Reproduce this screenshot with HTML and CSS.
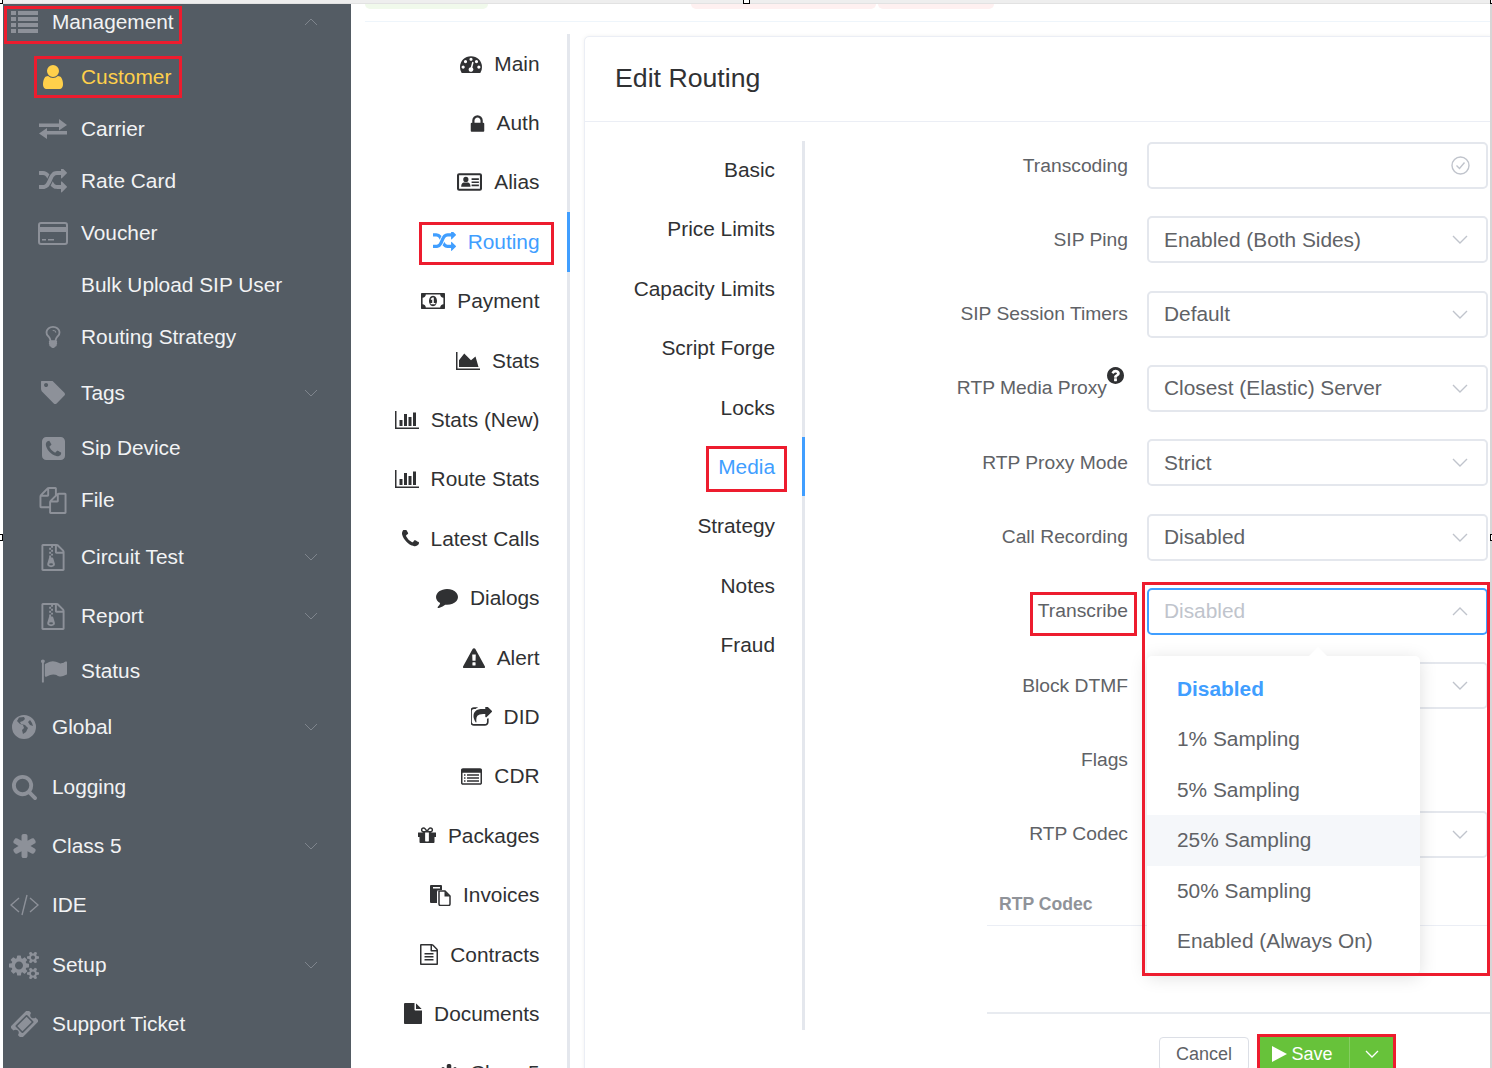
FILE: index.html
```html
<!DOCTYPE html>
<html lang="en">
<head>
<meta charset="utf-8">
<title>Edit Routing</title>
<link rel="stylesheet" href="styles.css">
</head>
<body>
<svg class="defs" aria-hidden="true">
  <symbol id="i-random" viewBox="0 200 1792 1400"><path d="M666 481q-60 92-137 273-22-45-37-72.5t-40.5-63.5-51-56.5-63-35-81.5-14.5h-224q-14 0-23-9t-9-23v-192q0-14 9-23t23-9h224q250 0 410 225zm1126 799q0 14-9 23l-320 320q-9 9-23 9-13 0-22.5-9.5t-9.5-22.5v-192q-32 0-85 .5t-81 1-73-1-71-5-64-10.5-63-18.5-58-28.5-59-40-55-53.5-56-69.5q59-93 136-273 22 45 37 72.5t40.5 63.5 51 56.5 63 35 81.5 14.5h256v-192q0-14 9-23t23-9q12 0 24 10l319 319q9 9 9 23zm0-896q0 14-9 23l-320 320q-9 9-23 9-13 0-22.5-9.5t-9.5-22.5v-192h-256q-48 0-87 15t-69 45-51 61.5-45 77.5q-32 62-78 171-29 66-49.5 111t-54 105-64 100-74 83-90 68.5-106.5 42-128 16.5h-224q-14 0-23-9t-9-23v-192q0-14 9-23t23-9h224q48 0 87-15t69-45 51-61.5 45-77.5q32-62 78-171 29-66 49.5-111t54-105 64-100 74-83 90-68.5 106.5-42 128-16.5h256v-192q0-14 9-23t23-9q12 0 24 10l319 319q9 9 9 23z"/></symbol>
  <symbol id="i-user" viewBox="256 128 1280 1536"><path d="M1536 1399q0 109-62.5 187t-150.5 78h-854q-88 0-150.5-78t-62.5-187q0-85 8.5-160.5t31.5-152 58.5-131 94-89 134.5-34.5q131 128 313 128t313-128q76 0 134.5 34.5t94 89 58.5 131 31.5 152 8.5 160.5zm-256-887q0 159-112.5 271.5t-271.5 112.5-271.5-112.5-112.5-271.5 112.5-271.5 271.5-112.5 271.5 112.5 112.5 271.5z"/></symbol>
  <symbol id="i-lock" viewBox="256 128 1280 1408"><path d="M640 768h512v-192q0-106-75-181t-181-75-181 75-75 181v192zm832 96v576q0 40-28 68t-68 28h-960q-40 0-68-28t-28-68v-576q0-40 28-68t68-28h32v-192q0-184 132-316t316-132 316 132 132 316v192h32q40 0 68 28t28 68z"/></symbol>
  <symbol id="i-search" viewBox="0 128 1728 1664"><path d="M1216 832q0-185-131.5-316.5t-316.5-131.5-316.5 131.5-131.5 316.5 131.5 316.5 316.5 131.5 316.5-131.5 131.5-316.5zm512 832q0 52-38 90t-90 38q-54 0-90-38l-343-342q-179 124-399 124-143 0-273.5-55.5t-225-150-150-225-55.5-273.5 55.5-273.5 150-225 225-150 273.5-55.5 273.5 55.5 225 150 150 225 55.5 273.5q0 220-124 399l343 343q37 37 37 90z"/></symbol>
  <symbol id="i-phone" viewBox="192 192 1408 1408"><path d="M1600 1240q0 27-10 70.5t-21 68.5q-21 50-122 106-94 51-186 51-27 0-53-3.5t-57.5-12.5-47-14.5-55.5-20.5-49-18q-98-35-175-83-127-79-264-216t-216-264q-48-77-83-175-3-9-18-49t-20.5-55.5-14.5-47-12.5-57.5-3.5-53q0-92 51-186 56-101 106-122 25-11 68.5-21t70.5-10q14 0 21 3 18 6 53 76 11 19 30 54t35 63.5 31 53.5q3 4 17.5 25t21.5 35.5 7 28.5q0 20-28.5 50t-62 55-62 53-28.5 46q0 9 5 22.5t8.5 20.5 14 24 11.5 19q76 137 174 235t235 174q2 1 19 11.5t24 14 20.5 8.5 22.5 5q18 0 46-28.5t53-62 55-62 50-28.5q14 0 28.5 7t35.5 21.5 25 17.5q25 15 53.5 31t63.5 35 54 30q70 35 76 53 3 7 3 21z"/></symbol>
  <symbol id="i-phone-square" viewBox="128 128 1536 1536"><path d="M1408 1193q0-11-2-16t-18-16.5-40.5-25-47.5-26.5-45.5-25-28.5-15q-5-3-19-13t-25-15-21-5q-15 0-36.5 20.5t-39.5 45-38.5 45-33.5 20.5q-7 0-16.5-3.5t-15.5-6.5-17-9.5-14-8.5q-99-55-170-126.5t-127-170.5q-2-3-8.5-14t-9.5-17-6.5-15.5-3.5-16.5q0-13 20.5-33.5t45-38.5 45-39.5 20.5-36.5q0-10-5-21t-15-25-13-19q-3-6-15-28.5t-25-45.5-26.5-47.5-25-40.5-16.5-18-16-2q-48 0-101 22-46 21-80 94.5t-34 130.5q0 16 2.5 34t5 30.5 9 33 10 29.5 12.5 33 11 30q60 164 216.5 320.5t320.5 216.5q6 2 30 11t33 12.5 29.5 10 33 9 30.5 5 34 2.5q57 0 130.5-34t94.5-80q22-53 22-101zm256-777v960q0 119-84.5 203.5t-203.5 84.5h-960q-119 0-203.5-84.5t-84.5-203.5v-960q0-119 84.5-203.5t203.5-84.5h960q119 0 203.5 84.5t84.5 203.5z"/></symbol>
  <symbol id="i-asterisk" viewBox="170 128 1450 1536"><path d="M1546 1050q46 26 59.5 77.5t-12.5 97.5l-64 110q-26 46-77.5 59.5t-97.5-12.5l-266-153v307q0 52-38 90t-90 38h-128q-52 0-90-38t-38-90v-307l-266 153q-46 26-97.5 12.5t-77.5-59.5l-64-110q-26-46-12.5-97.5t59.5-77.5l266-154-266-154q-46-26-59.5-77.5t12.5-97.5l64-110q26-46 77.5-59.5t97.5 12.5l266 153v-307q0-52 38-90t90-38h128q52 0 90 38t38 90v307l266-153q46-26 97.5-12.5t77.5 59.5l64 110q26 46 12.5 97.5t-59.5 77.5l-266 154z"/></symbol>
  <symbol id="i-tag" viewBox="128 192 1515 1516"><path d="M576 448q0-53-37.5-90.5t-90.5-37.5-90.5 37.5-37.5 90.5 37.5 90.5 90.5 37.5 90.5-37.5 37.5-90.5zm1067 576q0 53-37 90l-491 492q-39 37-91 37-53 0-90-37l-715-716q-38-37-64.5-101t-26.5-117v-416q0-52 38-90t90-38h416q53 0 117 26.5t102 64.5l715 714q37 39 37 91z"/></symbol>
  <symbol id="i-warning" viewBox="0 0 1792 1600"><path d="M1024 1375v-190q0-14-9.5-23.5t-22.5-9.5h-192q-13 0-22.5 9.5t-9.5 23.5v190q0 14 9.5 23.5t22.5 9.5h192q13 0 22.5-9.5t9.5-23.5zm-2-374l18-459q0-12-10-19-13-11-24-11h-220q-11 0-24 11-10 7-10 21l17 457q0 10 10 16.5t24 6.5h185q14 0 23.5-6.5t10.5-16.5zm-14-934l768 1408q35 63-2 126-17 29-46.5 46t-63.5 17h-1536q-34 0-63.5-17t-46.5-46q-37-63-2-126l768-1408q17-31 47-49t65-18 65 18 47 49z"/></symbol>
  <symbol id="i-comment" viewBox="0 256 1792 1536"><path d="M1792 896q0 174-120 321.5t-326 233-450 85.5q-70 0-145-8-198 175-460 242-49 14-114 22-17 2-30.5-9t-17.5-29v-1q-3-4-.5-12t2-10 4.5-9.5l6-9 7-8.5 8-9q7-8 31-34.5t34.5-38 31-39.5 32.5-51 27-59 26-76q-157-89-247.5-220t-90.5-281q0-130 71-248.5t191-204.5 286-136.5 348-50.5q244 0 450 85.5t326 233 120 321.5z"/></symbol>
  <symbol id="i-file" viewBox="128 0 1536 1792"><path d="M1152 512v-472q22 14 36 28l408 408q14 14 28 36h-472zm-128 32q0 40 28 68t68 28h544v1056q0 40-28 68t-68 28h-1344q-40 0-68-28t-28-68v-1600q0-40 28-68t68-28h800v544z"/></symbol>
  <symbol id="i-bars" viewBox="0 128 2048 1536"><path d="M640 896v512h-256v-512h256zm384-512v1024h-256v-1024h256zm1024 1152v128h-2048v-1536h128v1408h1920zm-640-896v768h-256v-768h256zm384-384v1152h-256v-1152h256z"/></symbol>
  <symbol id="i-area" viewBox="0 128 2048 1536"><path d="M2048 1536v128h-2048v-1536h128v1408h1920zm-384-1024l256 896h-1664v-576l448-576 576 576z"/></symbol>
  <symbol id="i-gift" viewBox="128 192 1536 1408"><path d="M1056 1356v-716h-320v716q0 25 18 38.5t46 13.5h192q28 0 46-13.5t18-38.5zm-456-844h195l-126-161q-26-31-69-31-40 0-68 28t-28 68 28 68 68 28zm688-96q0-40-28-68t-68-28q-43 0-69 31l-125 161h194q40 0 68-28t28-68zm376 256v320q0 14-9 23t-23 9h-96v416q0 40-28 68t-68 28h-1088q-40 0-68-28t-28-68v-416h-96q-14 0-23-9t-9-23v-320q0-14 9-23t23-9h440q-93 0-158.500-65.500t-65.500-158.500 65.500-158.500 158.500-65.500q107 0 168 77l128 165 128-165q61-77 168-77 93 0 158.500 65.500t65.500 158.500-65.500 158.500-158.500 65.500h440q14 0 23 9t9 23z"/></symbol>
  <symbol id="i-flag" viewBox="0 128 1792 1536"><path d="M320 256q0 72-64 110v1266q0 13-9.500 22.500t-22.500 9.500h-64q-13 0-22.500-9.500t-9.500-22.500v-1266q-64-38-64-110 0-53 37.500-90.500t90.500-37.500 90.500 37.500 37.500 90.500zm1472 64v763q0 25-12.500 38.500t-39.500 27.500q-215 116-369 116-61 0-123.500-22t-108.500-48-115.500-48-142.500-22q-192 0-464 146-17 9-33 9-26 0-45-19t-19-45v-742q0-32 31-55 21-14 79-43 236-120 421-120 107 0 200 29t219 88q38 19 88 19 54 0 117.500-21t110-47 88-47 54.500-21q26 0 45 19t19 45z"/></symbol>
  <symbol id="i-tacho" viewBox="0 256 1792 1280"><path d="M384 1152q0-53-37.500-90.500t-90.500-37.500-90.500 37.500-37.500 90.500 37.500 90.500 90.500 37.500 90.500-37.500 37.500-90.500zm192-448q0-53-37.500-90.500t-90.500-37.500-90.500 37.500-37.500 90.500 37.500 90.500 90.500 37.500 90.500-37.500 37.500-90.500zm428 481l101-382q6-26-7.500-48.500t-38.500-29.500-48 6.500-30 39.500l-101 382q-60 5-107 43.500t-63 98.500q-20 77 20 146t117 89 146-20 89-117q16-60-6-117t-72-91zm660-33q0-53-37.500-90.500t-90.500-37.500-90.500 37.500-37.500 90.500 37.500 90.500 90.500 37.500 90.500-37.500 37.500-90.500zm-640-640q0-53-37.500-90.500t-90.500-37.500-90.500 37.500-37.500 90.500 37.500 90.500 90.500 37.500 90.500-37.500 37.500-90.500zm448 192q0-53-37.500-90.500t-90.500-37.500-90.500 37.500-37.500 90.500 37.500 90.500 90.500 37.500 90.500-37.500 37.500-90.500zm320 448q0 261-141 483-19 29-54 29h-1402q-35 0-54-29-141-221-141-483 0-182 71-348t191-286 286-191 348-71 348 71 286 191 191 286 71 348z"/></symbol>
  <symbol id="i-share" viewBox="128 128 1600 1408"><path d="M1472 989v259q0 119-84.500 203.500t-203.500 84.500h-832q-119 0-203.500-84.500t-84.500-203.500v-832q0-119 84.500-203.500t203.500-84.500h255q13 0 22.500 9.500t9.500 22.500q0 27-26 32-77 26-133 60-10 4-16 4h-112q-66 0-113 47t-47 113v832q0 66 47 113t113 47h832q66 0 113-47t47-113v-214q0-19 18-29 28-13 54-37 16-16 35-8 21 9 21 29zm237-496l-384 384q-18 19-45 19-12 0-25-5-39-17-39-59v-192h-160q-323 0-438 131-119 137-74 473 3 23-20 34-8 2-12 2-16 0-26-13-10-14-21-31t-39.500-68.500-49.500-99.500-38.500-114-17.500-122q0-49 3.500-91t14-90 28-88 47-81.500 68.500-74 94.500-61.500 124.500-48.500 159.500-30.500 196.500-11h160v-192q0-42 39-59 13-5 25-5 26 0 45 19l384 384q19 19 19 45t-19 45z"/></symbol>
  <symbol id="i-file-text" viewBox="128 0 1536 1792"><path d="M1596 380q28 28 48 76t20 88v1152q0 40-28 68t-68 28h-1344q-40 0-68-28t-28-68v-1600q0-40 28-68t68-28h896q40 0 88 20t76 48zm-444-244v376h376q-10-29-22-41l-313-313q-12-12-41-22zm384 1528v-1024h-416q-40 0-68-28t-28-68v-416h-768v1536h1280zm-1024-864q0-14 9-23t23-9h704q14 0 23 9t9 23v64q0 14-9 23t-23 9h-704q-14 0-23-9t-9-23v-64zm736 224q14 0 23 9t9 23v64q0 14-9 23t-23 9h-704q-14 0-23-9t-9-23v-64q0-14 9-23t23-9h704zm0 256q14 0 23 9t9 23v64q0 14-9 23t-23 9h-704q-14 0-23-9t-9-23v-64q0-14 9-23t23-9h704z"/></symbol>
  <symbol id="i-zip" viewBox="128 0 1536 1792"><path d="M768 384v-128h-128v128h128zm128 128v-128h-128v128h128zm-128 128v-128h-128v128h128zm128 128v-128h-128v128h128zm700-388q28 28 48 76t20 88v1152q0 40-28 68t-68 28h-1344q-40 0-68-28t-28-68v-1600q0-40 28-68t68-28h896q40 0 88 20t76 48zm-444-244v376h376q-10-29-22-41l-313-313q-12-12-41-22zm384 1528v-1024h-416q-40 0-68-28t-28-68v-416h-128v128h-128v-128h-512v1536h1280zm-627-721l107 349q8 27 8 52 0 83-72.500 137.500t-183.500 54.500-183.500-54.500-72.500-137.500q0-25 8-52 21-63 120-396v-128h128v128h79q22 0 39 13t23 34zm-141 465q53 0 90.500-19t37.500-45-37.500-45-90.500-19-90.500 19-37.500 45 37.500 45 90.500 19z"/></symbol>
  <symbol id="i-files" viewBox="0 0 1792 1792"><path d="M1696 384q40 0 68 28t28 68v1216q0 40-28 68t-68 28h-960q-40 0-68-28t-28-68v-288h-544q-40 0-68-28t-28-68v-672q0-40 20-88t48-76l408-408q28-28 76-48t88-20h416q40 0 68 28t28 68v328q68-40 128-40h416zm-544 213l-299 299h299v-299zm-640-384l-299 299h299v-299zm196 647l316-316v-416h-384v416q0 40-28 68t-68 28h-416v640h512v-256q0-40 20-88t48-76zm956 804v-1152h-384v416q0 40-28 68t-68 28h-416v640h896z"/></symbol>
  <symbol id="i-bulb" viewBox="384 64 1024 1664"><path d="M1120 576q0 13-9.500 22.500t-22.500 9.500-22.500-9.500-9.500-22.500q0-46-54-71t-106-25q-13 0-22.500-9.500t-9.500-22.500 9.500-22.500 22.500-9.500q50 0 99.500 16t87 54 37.500 90zm160 0q0-72-34.500-134t-90-101.500-123-62-136.500-22.500-136.500 22.500-123 62-90 101.500-34.500 134q0 101 68 180 10 11 30.500 33t30.500 33q128 153 141 298h228q13-145 141-298 10-11 30.500-33t30.500-33q68-79 68-180zm128 0q0 155-103 268-45 49-74.500 87t-59.500 95.500-34 107.500q47 28 47 82 0 37-25 64 25 27 25 64 0 52-45 81 13 23 13 47 0 46-31.500 71t-77.500 25q-20 44-60 70t-87 26-87-26-60-70q-46 0-77.500-25t-31.500-71q0-24 13-47-45-29-45-81 0-37 25-64-25-27-25-64 0-54 47-82-4-50-34-107.500t-59.500-95.500-74.500-87q-103-113-103-268 0-99 44.500-184.500t117-142 164-89 186.500-32.500 186.500 32.500 164 89 117 142 44.500 184.500z"/></symbol>
  <symbol id="i-cogs" viewBox="0 128 1920 1536"><path d="M896 896q0-106-75-181t-181-75-181 75-75 181 75 181 181 75 181-75 75-181zm768 512q0-52-38-90t-90-38-90 38-38 90q0 53 37.500 90.500t90.500 37.500 90.500-37.500 37.500-90.500zm0-1024q0-52-38-90t-90-38-90 38-38 90q0 53 37.500 90.500t90.500 37.500 90.500-37.500 37.500-90.500zm-384 421v185q0 10-7 19.500t-16 10.500l-155 24q-11 35-32 76 34 48 90 115 7 11 7 20 0 12-7 19-23 30-82.500 89.500t-78.500 59.500q-11 0-21-7l-115-90q-37 19-77 31-11 108-23 155-7 24-30 24h-186q-11 0-20-7.500t-10-17.500l-23-153q-34-10-75-31l-118 89q-7 7-20 7-11 0-21-8-144-133-144-160 0-9 7-19 10-14 41-53t47-61q-23-44-35-82l-152-24q-10-1-17-9.500t-7-19.500v-185q0-10 7-19.500t16-10.500l155-24q11-35 32-76-34-48-90-115-7-11-7-19 0-12 7-20 22-30 82-89t79-59q11 0 21 7l115 90q34-18 77-32 11-108 23-154 7-24 30-24h186q11 0 20 7.500t10 17.500l23 153q34 10 75 31l118-89q8-7 20-7 11 0 21 8 144 133 144 160 0 8-7 19-12 16-42 54t-45 60q23 48 34 82l152 23q10 2 17 10.500t7 19.500zm640 533v140q0 16-149 31-12 27-30 52 51 113 51 138 0 4-4 7-122 71-124 71-8 0-46-47t-52-68q-20 2-30 2t-30-2q-14 21-52 68t-46 47q-2 0-124-71-4-3-4-7 0-25 51-138-18-25-30-52-149-15-149-31v-140q0-16 149-31 13-29 30-52-51-113-51-138 0-4 4-7 4-2 35-20t59-34 30-16q8 0 46 46.500t52 67.500q20-2 30-2t30 2q51-71 92-112l6-2q4 0 124 70 4 3 4 7 0 25-51 138 17 23 30 52 149 15 149 31zm0-1024v140q0 16-149 31-12 27-30 52 51 113 51 138 0 4-4 7-122 71-124 71-8 0-46-47t-52-68q-20 2-30 2t-30-2q-14 21-52 68t-46 47q-2 0-124-71-4-3-4-7 0-25 51-138-18-25-30-52-149-15-149-31v-140q0-16 149-31 13-29 30-52-51-113-51-138 0-4 4-7 4-2 35-20t59-34 30-16q8 0 46 46.500t52 67.500q20-2 30-2t30 2q51-71 92-112l6-2q4 0 124 70 4 3 4 7 0 25-51 138 17 23 30 52 149 15 149 31z"/></symbol>
  <symbol id="i-ticket" viewBox="64 128 1664 1536"><path d="M1024 452l316 316-572 572-316-316zm-211 979l618-618q19-19 19-45t-19-45l-362-362q-18-18-45-18t-45 18l-618 618q-19 19-19 45t19 45l362 362q18 18 45 18t45-18zm889-637l-907 908q-37 37-90.500 37t-90.500-37l-126-126q56-56 56-136t-56-136-136-56-136 56l-125-126q-37-37-37-90.500t37-90.500l907-906q37-37 90.500-37t90.500 37l125 125q-56 56-56 136t56 136 136 56 136-56l126 125q37 37 37 90.500t-37 90.500z"/></symbol>
  <symbol id="i-money" viewBox="0 256 1920 1280"><path d="M768 1152h384v-96h-128v-448h-114l-148 137 77 80q42-37 55-57h2v288h-128v96zm512-256q0 70-21 142t-59.500 134-101.500 101-138 39-138-39-101.500-101-59.500-134-21-142 21-142 59.500-134 101.500-101 138-39 138 39 101.500 101 59.500 134 21 142zm512 256v-512q-106 0-181-75t-75-181h-1152q0 106-75 181t-181 75v512q106 0 181 75t75 181h1152q0-106 75-181t181-75zm128-832v1152q0 26-19 45t-45 19h-1792q-26 0-45-19t-19-45v-1152q0-26 19-45t45-19h1792q26 0 45 19t19 45z"/></symbol>
  <symbol id="i-list-alt" viewBox="0 128 1792 1408"><path d="M384 1184v64q0 13-9.500 22.500t-22.500 9.500h-64q-13 0-22.500-9.500t-9.500-22.500v-64q0-13 9.500-22.500t22.500-9.500h64q13 0 22.500 9.500t9.500 22.500zm0-256v64q0 13-9.500 22.500t-22.500 9.500h-64q-13 0-22.500-9.500t-9.500-22.500v-64q0-13 9.500-22.500t22.500-9.500h64q13 0 22.500 9.500t9.500 22.500zm0-256v64q0 13-9.500 22.500t-22.500 9.500h-64q-13 0-22.500-9.500t-9.500-22.500v-64q0-13 9.500-22.500t22.500-9.500h64q13 0 22.500 9.500t9.500 22.500zm1152 512v64q0 13-9.500 22.500t-22.500 9.500h-960q-13 0-22.500-9.500t-9.500-22.500v-64q0-13 9.500-22.500t22.500-9.500h960q13 0 22.500 9.500t9.500 22.500zm0-256v64q0 13-9.500 22.500t-22.500 9.500h-960q-13 0-22.500-9.500t-9.500-22.500v-64q0-13 9.500-22.500t22.500-9.500h960q13 0 22.500 9.500t9.500 22.500zm0-256v64q0 13-9.500 22.500t-22.500 9.500h-960q-13 0-22.500-9.500t-9.500-22.500v-64q0-13 9.500-22.500t22.500-9.500h960q13 0 22.500 9.500t9.500 22.500zm128 704v-832q0-13-9.500-22.500t-22.500-9.500h-1472q-13 0-22.500 9.500t-9.500 22.500v832q0 13 9.500 22.500t22.500 9.500h1472q13 0 22.500-9.500t9.500-22.500zm128-1088v1088q0 66-47 113t-113 47h-1472q-66 0-113-47t-47-113v-1088q0-66 47-113t113-47h1472q66 0 113 47t47 113z"/></symbol>
  <symbol id="i-help" viewBox="128 128 1536 1536"><path d="M1024 1376v-192q0-14-9-23t-23-9h-192q-14 0-23 9t-9 23v192q0 14 9 23t23 9h192q14 0 23-9t9-23zm256-672q0-88-55.500-163t-138.500-116-170-41q-243 0-371 213-15 24 8 42l132 100q7 6 19 6 16 0 25-12 53-68 86-92 34-24 86-24 48 0 85.500 26t37.500 59q0 38-20 61t-68 45q-63 28-115.500 86.500t-52.500 125.500v36q0 14 9 23t23 9h192q14 0 23-9t9-23q0-19 21.500-49.500t54.500-49.500q32-18 49-28.500t46-35 44.500-48 28-60.500 12.500-81zm384 192q0 209-103 385.500t-279.500 279.500-385.500 103-385.500-103-279.500-279.500-103-385.500 103-385.500 279.500-279.500 385.500-103 385.500 103 279.500 279.500 103 385.500z"/></symbol>
  <symbol id="i-list" viewBox="0 0 27 22"><path d="M0 0h5v4H0zM7 0h20v4H7zM0 6h5v4H0zM7 6h20v4H7zM0 12h5v4H0zM7 12h20v4H7zM0 18h5v4H0zM7 18h20v4H7z"/></symbol>
  <symbol id="i-exchange" viewBox="0 0 28 20"><path d="M0 4.500h20V0l8 6-8 5.500V8H0zM28 12v3.500H8V20l-8-5.500L8 9v3z"/></symbol>
  <symbol id="i-card" viewBox="0 0 30 23"><path fill-rule="evenodd" d="M3 0h24a3 3 0 0 1 3 3v17a3 3 0 0 1-3 3H3a3 3 0 0 1-3-3V3a3 3 0 0 1 3-3zm0 2a1 1 0 0 0-1 1v2h26V3a1 1 0 0 0-1-1zM2 10v10a1 1 0 0 0 1 1h24a1 1 0 0 0 1-1V10zm2 7h4v1.500H4zm6 0h6v1.500h-6z"/></symbol>
  <symbol id="i-globe" viewBox="0 0 24 24"><path fill-rule="evenodd" d="M12 0a12 12 0 1 1 0 24 12 12 0 0 1 0-24zM7 2.500 5 6l3 3 3 1 1 3-2 2 1 4 3-2 2-4-3-3-4-1-1-2 3-1 2-2-1-2zM18 5l-2 2 2 3 3 1-1-3z"/></symbol>
  <symbol id="i-id" viewBox="0 0 24 17"><path fill-rule="evenodd" d="M2 0h20a2 2 0 0 1 2 2v13a2 2 0 0 1-2 2H2a2 2 0 0 1-2-2V2a2 2 0 0 1 2-2zm0 2v13h20V2zm6.500 1.500a2.500 2.500 0 1 1 0 5 2.500 2.500 0 0 1 0-5zM4 13c0-3 1.500-4 2.500-4h4c1 0 2.500 1 2.500 4zm10-8h7v1.500h-7zm0 3h7v1.500h-7zm0 3h7v1.500h-7z"/></symbol>
  <symbol id="i-invoice" viewBox="0 0 21 21"><path d="M1 0h10a1 1 0 0 1 1 1v4H9a2 2 0 0 0-2 2v11H1a1 1 0 0 1-1-1V1a1 1 0 0 1 1-1zM3 2v1.500h7V2z"/><path d="M9 6h6l5 5v8a1.500 1.500 0 0 1-1.500 1.500h-8A1.500 1.500 0 0 1 9 19z" fill="#fff" stroke="currentColor" stroke-width="1.500"/><path d="M14.500 6v5.500H20z"/></symbol>
</svg>

<div class="topstrip"></div>

<div class="layout">
  <nav class="side">
    <a class="item"><span class="ibox"><svg class="ic" width="27" height="22"><use href="#i-list"/></svg></span><span>Management</span><svg class="caret" width="14" height="8" viewBox="0 0 14 8"><path d="M1 7l6-6 6 6"/></svg></a>
    <div class="child m15 active"><span class="ibox"><svg class="ic" width="20" height="24"><use href="#i-user"/></svg></span><span>Customer</span></div>
    <div class="child m12"><span class="ibox"><svg class="ic" width="28" height="20"><use href="#i-exchange"/></svg></span><span>Carrier</span></div>
    <div class="child m12"><span class="ibox"><svg class="ic" width="28" height="24"><use href="#i-random"/></svg></span><span>Rate Card</span></div>
    <div class="child m12"><span class="ibox"><svg class="ic" width="30" height="23"><use href="#i-card"/></svg></span><span>Voucher</span></div>
    <div class="child m12"><span class="ibox"></span><span>Bulk Upload SIP User</span></div>
    <div class="child m12"><span class="ibox"><svg class="ic" width="16" height="24"><use href="#i-bulb"/></svg></span><span>Routing Strategy</span></div>
    <div class="child m16"><span class="ibox"><svg class="ic" width="24" height="24"><use href="#i-tag"/></svg></span><span>Tags</span><svg class="caret" width="14" height="8" viewBox="0 0 14 8"><path d="M1 1l6 6 6-6"/></svg></div>
    <div class="child m15"><span class="ibox"><svg class="ic" width="23" height="23"><use href="#i-phone-square"/></svg></span><span>Sip Device</span></div>
    <div class="child m12"><span class="ibox"><svg class="ic" width="28" height="27"><use href="#i-files"/></svg></span><span>File</span></div>
    <div class="child m17"><span class="ibox"><svg class="ic" width="24" height="27"><use href="#i-zip"/></svg></span><span>Circuit Test</span><svg class="caret" width="14" height="8" viewBox="0 0 14 8"><path d="M1 1l6 6 6-6"/></svg></div>
    <div class="child m19"><span class="ibox"><svg class="ic" width="24" height="27"><use href="#i-zip"/></svg></span><span>Report</span><svg class="caret" width="14" height="8" viewBox="0 0 14 8"><path d="M1 1l6 6 6-6"/></svg></div>
    <div class="child m15"><span class="ibox"><svg class="ic" width="27" height="24"><use href="#i-flag"/></svg></span><span>Status</span></div>
    <a class="item m16"><span class="ibox"><svg class="ic" width="24" height="24"><use href="#i-globe"/></svg></span><span>Global</span><svg class="caret" width="14" height="8" viewBox="0 0 14 8"><path d="M1 1l6 6 6-6"/></svg></a>
    <a class="item m20"><span class="ibox"><svg class="ic" width="26" height="25"><use href="#i-search"/></svg></span><span>Logging</span></a>
    <a class="item m19"><span class="ibox"><svg class="ic" width="23" height="24"><use href="#i-asterisk"/></svg></span><span>Class 5</span><svg class="caret" width="14" height="8" viewBox="0 0 14 8"><path d="M1 1l6 6 6-6"/></svg></a>
    <a class="item m19"><span class="ibox"><svg class="ic-line" width="29" height="22" viewBox="0 0 29 22"><path d="M9 4l-8 7 8 7M20 4l8 7-8 7M17 1l-5 20"/></svg></span><span>IDE</span></a>
    <a class="item m20"><span class="ibox"><svg class="ic" width="30" height="27"><use href="#i-cogs"/></svg></span><span>Setup</span><svg class="caret" width="14" height="8" viewBox="0 0 14 8"><path d="M1 1l6 6 6-6"/></svg></a>
    <a class="item m19"><span class="ibox"><svg class="ic" width="27" height="26"><use href="#i-ticket"/></svg></span><span>Support Ticket</span></a>
  </nav>

  <main class="content">
    <div class="pillbar">
      <span class="pill pill-green"></span>
      <span class="pill pill-red1"></span>
      <span class="pill pill-red2"></span>
    </div>

    <div class="workspace">
      <div class="subnav">
        <div class="sub"><svg width="22" height="18"><use href="#i-tacho"/></svg><span>Main</span></div>
        <div class="sub"><svg width="15" height="17"><use href="#i-lock"/></svg><span>Auth</span></div>
        <div class="sub"><svg width="25" height="18"><use href="#i-id"/></svg><span>Alias</span></div>
        <div class="sub sub-active"><svg width="23" height="19"><use href="#i-random"/></svg><span>Routing</span></div>
        <div class="sub"><svg width="24" height="16"><use href="#i-money"/></svg><span>Payment</span></div>
        <div class="sub"><svg width="24" height="18"><use href="#i-area"/></svg><span>Stats</span></div>
        <div class="sub"><svg width="24" height="18"><use href="#i-bars"/></svg><span>Stats (New)</span></div>
        <div class="sub"><svg width="24" height="18"><use href="#i-bars"/></svg><span>Route Stats</span></div>
        <div class="sub"><svg width="17" height="17"><use href="#i-phone"/></svg><span>Latest Calls</span></div>
        <div class="sub"><svg width="22" height="19"><use href="#i-comment"/></svg><span>Dialogs</span></div>
        <div class="sub"><svg width="22" height="20"><use href="#i-warning"/></svg><span>Alert</span></div>
        <div class="sub"><svg width="21" height="19"><use href="#i-share"/></svg><span>DID</span></div>
        <div class="sub"><svg width="21" height="17"><use href="#i-list-alt"/></svg><span>CDR</span></div>
        <div class="sub"><svg width="18" height="17"><use href="#i-gift"/></svg><span>Packages</span></div>
        <div class="sub"><svg width="21" height="21"><use href="#i-invoice"/></svg><span>Invoices</span></div>
        <div class="sub"><svg width="18" height="21"><use href="#i-file-text"/></svg><span>Contracts</span></div>
        <div class="sub"><svg width="18" height="21"><use href="#i-file"/></svg><span>Documents</span></div>
        <div class="sub"><svg width="18" height="18"><use href="#i-asterisk"/></svg><span>Class 5</span></div>
      </div>

      <section class="card">
        <header class="card-head">Edit Routing</header>
        <div class="card-body">
          <div class="tabs">
            <div class="tab">Basic</div>
            <div class="tab">Price Limits</div>
            <div class="tab">Capacity Limits</div>
            <div class="tab">Script Forge</div>
            <div class="tab">Locks</div>
            <div class="tab tab-active">Media</div>
            <div class="tab">Strategy</div>
            <div class="tab">Notes</div>
            <div class="tab">Fraud</div>
          </div>

          <form class="form">
            <div class="row"><label class="lbl">Transcoding</label>
              <div class="select"><span></span><svg class="check" width="19" height="19" viewBox="0 0 19 19"><circle cx="9.500" cy="9.500" r="8.500"/><path d="M5.500 9.500l3 3 5-6"/></svg></div></div>
            <div class="row"><label class="lbl">SIP Ping</label>
              <div class="select"><span>Enabled (Both Sides)</span><svg class="chev" width="16" height="9" viewBox="0 0 16 9"><path d="M1 1l7 7 7-7"/></svg></div></div>
            <div class="row"><label class="lbl">SIP Session Timers</label>
              <div class="select"><span>Default</span><svg class="chev" width="16" height="9" viewBox="0 0 16 9"><path d="M1 1l7 7 7-7"/></svg></div></div>
            <div class="row"><label class="lbl">RTP Media Proxy<svg class="help" width="17" height="17"><use href="#i-help"/></svg></label>
              <div class="select"><span>Closest (Elastic) Server</span><svg class="chev" width="16" height="9" viewBox="0 0 16 9"><path d="M1 1l7 7 7-7"/></svg></div></div>
            <div class="row"><label class="lbl">RTP Proxy Mode</label>
              <div class="select"><span>Strict</span><svg class="chev" width="16" height="9" viewBox="0 0 16 9"><path d="M1 1l7 7 7-7"/></svg></div></div>
            <div class="row"><label class="lbl">Call Recording</label>
              <div class="select"><span>Disabled</span><svg class="chev" width="16" height="9" viewBox="0 0 16 9"><path d="M1 1l7 7 7-7"/></svg></div></div>
            <div class="row"><label class="lbl">Transcribe</label>
              <div class="select select-open"><span>Disabled</span><svg class="chev" width="16" height="9" viewBox="0 0 16 9"><path d="M1 8l7-7 7 7"/></svg>
                <div class="dropdown">
                  <div class="opt opt-sel">Disabled</div>
                  <div class="opt">1% Sampling</div>
                  <div class="opt">5% Sampling</div>
                  <div class="opt opt-hover">25% Sampling</div>
                  <div class="opt">50% Sampling</div>
                  <div class="opt">Enabled (Always On)</div>
                </div>
              </div></div>
            <div class="row"><label class="lbl">Block DTMF</label>
              <div class="select"><span></span><svg class="chev" width="16" height="9" viewBox="0 0 16 9"><path d="M1 1l7 7 7-7"/></svg></div></div>
            <div class="row"><label class="lbl">Flags</label></div>
            <div class="row"><label class="lbl">RTP Codec</label>
              <div class="select"><span></span><svg class="chev" width="16" height="9" viewBox="0 0 16 9"><path d="M1 1l7 7 7-7"/></svg></div></div>

            <div class="table-head"><span>RTP Codec</span></div>
            <div class="form-rule"></div>
            <div class="actions">
              <button type="button" class="btn-cancel">Cancel</button>
              <div class="btn-save">
                <span class="save-main"><svg width="15" height="16" viewBox="0 0 15 16"><path d="M0 0l15 8-15 8z"/></svg>Save</span>
                <span class="save-more"><svg width="14" height="8" viewBox="0 0 14 8"><path d="M1 1l6 6 6-6"/></svg></span>
              </div>
            </div>
          </form>
        </div>
      </section>
    </div>
  </main>
</div>

<div class="mark mark-mgmt"></div>
<div class="mark mark-cust"></div>
<div class="mark mark-routing"></div>
<div class="mark mark-media"></div>
<div class="mark mark-transcribe"></div>
<div class="mark mark-drop"></div>
<div class="mark mark-save"></div>

<div class="edge-right"></div>
<div class="handle h-tl"></div>
<div class="handle h-t"></div>
<div class="handle h-tr"></div>
<div class="handle h-l"></div>
<div class="handle h-r"></div>
</body>
</html>
```
FILE: styles.css
```css
* { box-sizing: border-box; }
html, body { margin: 0; padding: 0; }
body {
  position: relative;
  width: 1492px;
  height: 1068px;
  overflow: hidden;
  background: #fff;
  font-family: "Liberation Sans", Arial, sans-serif;
  font-size: 20.85px;
  color: #303133;
}
svg { display: block; flex: none; fill: currentColor; }
.defs { position: absolute; width: 0; height: 0; overflow: hidden; }

.topstrip { position: absolute; left: 0; top: 0; width: 100%; height: 4px; background: #eeeeee; border-bottom: 1px solid #e2e2e2; z-index: 5; }
.edge-right { position: absolute; right: 0; top: 0; width: 2px; height: 100%; background: #d6d6d6; z-index: 5; }

.layout { display: flex; height: 100%; padding-left: 3px; }

/* Sidebar */
.side {
  width: 348px;
  flex: none;
  background: #545c64;
  color: #f2f3f4;
  padding-top: 2px;
}
.item, .child {
  display: flex;
  align-items: center;
  height: 40px;
  padding-right: 33px;
}
.item { padding-left: 5px; }
.child { padding-left: 34px; }
.ibox { width: 32px; margin-right: 12px; flex: none; display: flex; justify-content: center; align-items: center; }
.ic { color: #8d9199; }
.ic-line { fill: none; stroke: #8d9199; stroke-width: 1.4; }
.caret { margin-left: auto; fill: none; stroke: #7f858d; stroke-width: 1; }
.active { color: #ffd04b; }
.active .ic { color: #ffd04b; }
.m12 { margin-top: 12px; }
.m15 { margin-top: 15px; }
.m16 { margin-top: 16px; }
.m17 { margin-top: 17px; }
.m19 { margin-top: 19px; }
.m20 { margin-top: 20px; }

/* Content */
.content { flex: 1; min-width: 0; }
.pillbar {
  display: flex;
  height: 22px;
  margin-left: 14px;
  border-bottom: 1px solid #eef5fb;
}
.pill { height: 9px; border-radius: 0 0 5px 5px; flex: none; }
.pill-green { width: 123px; background: #f0f9eb; }
.pill-red1 { width: 185px; margin-left: 203px; background: #fef0f0; }
.pill-red2 { width: 116px; margin-left: 2px; background: #fef0f0; }

.workspace { display: flex; margin-top: 12px; }

.subnav {
  width: 219px;
  flex: none;
  border-right: 3px solid #e4e7ed;
  height: 1100px;
}
.sub {
  display: flex;
  align-items: center;
  justify-content: flex-end;
  gap: 12px;
  height: 59.4px;
  padding-right: 27.5px;
  margin-right: -3px;
  border-right: 3px solid transparent;
  color: #303133;
}
.sub-active { color: #409eff; border-right-color: #409eff; }

.card {
  flex: 1;
  min-width: 0;
  margin: 2px 0 0 14px;
  height: 1100px;
  background: #fff;
  border: 1px solid #ebeef5;
  border-radius: 5px 0 0 0;
  box-shadow: 0 0 4px rgba(0, 0, 0, .06);
}
.card-head {
  height: 85px;
  padding: 0 0 1px 30px;
  display: flex;
  align-items: center;
  font-size: 26.7px;
  border-bottom: 1px solid #ebeef5;
}
.card-body { display: flex; padding-top: 19px; align-items: flex-start; }

.tabs {
  width: 220px;
  flex: none;
  height: 889px;
  border-right: 3px solid #e4e7ed;
}
.tab {
  height: 59.4px;
  line-height: 59.4px;
  text-align: right;
  padding-right: 27px;
  margin-right: -3px;
  border-right: 3px solid transparent;
}
.tab:first-child { margin-top: -1px; }
.tab-active { color: #409eff; border-right-color: #409eff; }

.form { flex: 1; min-width: 0; padding-top: 1px; }
.row {
  display: flex;
  align-items: center;
  height: 47px;
  margin-bottom: 27.33px;
}
.lbl {
  width: 323px;
  flex: none;
  margin-right: 19px;
  display: flex;
  justify-content: flex-end;
  font-size: 19.25px;
  color: #606266;
}
.help { align-self: flex-start; margin: -10px 4px 0 0; color: #303133; }
.select {
  position: relative;
  width: 341px;
  height: 47px;
  flex: none;
  display: flex;
  align-items: center;
  justify-content: space-between;
  padding: 0 18px 0 15px;
  border: 2px solid #e4e7ed;
  border-radius: 5px;
  color: #606266;
}
.chev { fill: none; stroke: #c0c4cc; stroke-width: 1.4; }
.check { fill: none; stroke: #c0c4cc; stroke-width: 1.4; margin-right: -2px; }
.select-open { border-color: #409eff; color: #c0c4cc; }

.dropdown {
  position: absolute;
  left: -2px;
  top: 66px;
  width: 273px;
  padding: 8px 0;
  background: #fff;
  border-radius: 5px;
  box-shadow: 0 3px 18px rgba(0, 0, 0, .13);
  z-index: 3;
}
.dropdown::before {
  content: "";
  position: absolute;
  left: 162px;
  top: -9px;
  border: 9px solid transparent;
  border-top: 0;
  border-bottom-color: #fff;
}
.opt {
  height: 50.4px;
  line-height: 50.4px;
  padding-left: 30px;
  color: #606266;
}
.opt-sel { color: #409eff; font-weight: 700; }
.opt-hover { background: #f5f7fa; }

.table-head {
  margin: -2px 0 0 182px;
  height: 43px;
  padding: 11px 0 0 12px;
  border-bottom: 1px solid #ebeef5;
  font-size: 17.6px;
  font-weight: 700;
  color: #909399;
}
.form-rule { margin: 86px 0 0 182px; border-top: 2px solid #e8ebf0; }
.actions {
  display: flex;
  justify-content: flex-end;
  gap: 11px;
  padding-right: 97px;
  margin-top: 23px;
}
.btn-cancel {
  width: 90px;
  height: 34px;
  background: #fff;
  border: 1px solid #dcdfe6;
  border-radius: 4px;
  font: 18px "Liberation Sans", Arial, sans-serif;
  color: #606266;
  padding: 0;
}
.btn-save {
  display: flex;
  width: 134px;
  height: 34px;
  background: #67c23a;
  color: #fff;
  font-size: 18px;
}
.save-main { width: 90px; display: flex; align-items: center; justify-content: center; gap: 4px; padding-right: 4px; border-right: 1px solid #85ce61; }
.save-more { flex: 1; display: flex; align-items: center; justify-content: center; }
.save-more svg { fill: none; stroke: #fff; stroke-width: 1.3; }

/* Annotations drawn over the screenshot */
.mark { position: absolute; border: 3px solid #ed1c2e; z-index: 6; }
.mark-mgmt { left: 4px; top: 6px; width: 178px; height: 38px; }
.mark-cust { left: 34px; top: 56px; width: 148px; height: 42px; }
.mark-routing { left: 419px; top: 222px; width: 135px; height: 43px; }
.mark-media { left: 706px; top: 446px; width: 81px; height: 46px; }
.mark-transcribe { left: 1030px; top: 592px; width: 107px; height: 44px; }
.mark-drop { left: 1142px; top: 582px; width: 348px; height: 394px; }
.mark-save { left: 1257px; top: 1034px; width: 139px; height: 50px; }

.handle { position: absolute; width: 7px; height: 7px; background: #fff; border: 1px solid #000; z-index: 7; }
.h-tl { left: -4px; top: -3px; }
.h-t { left: 743px; top: -3px; }
.h-tr { right: -5px; top: -3px; }
.h-l { left: -4px; top: 534px; }
.h-r { right: -5px; top: 534px; }
```
